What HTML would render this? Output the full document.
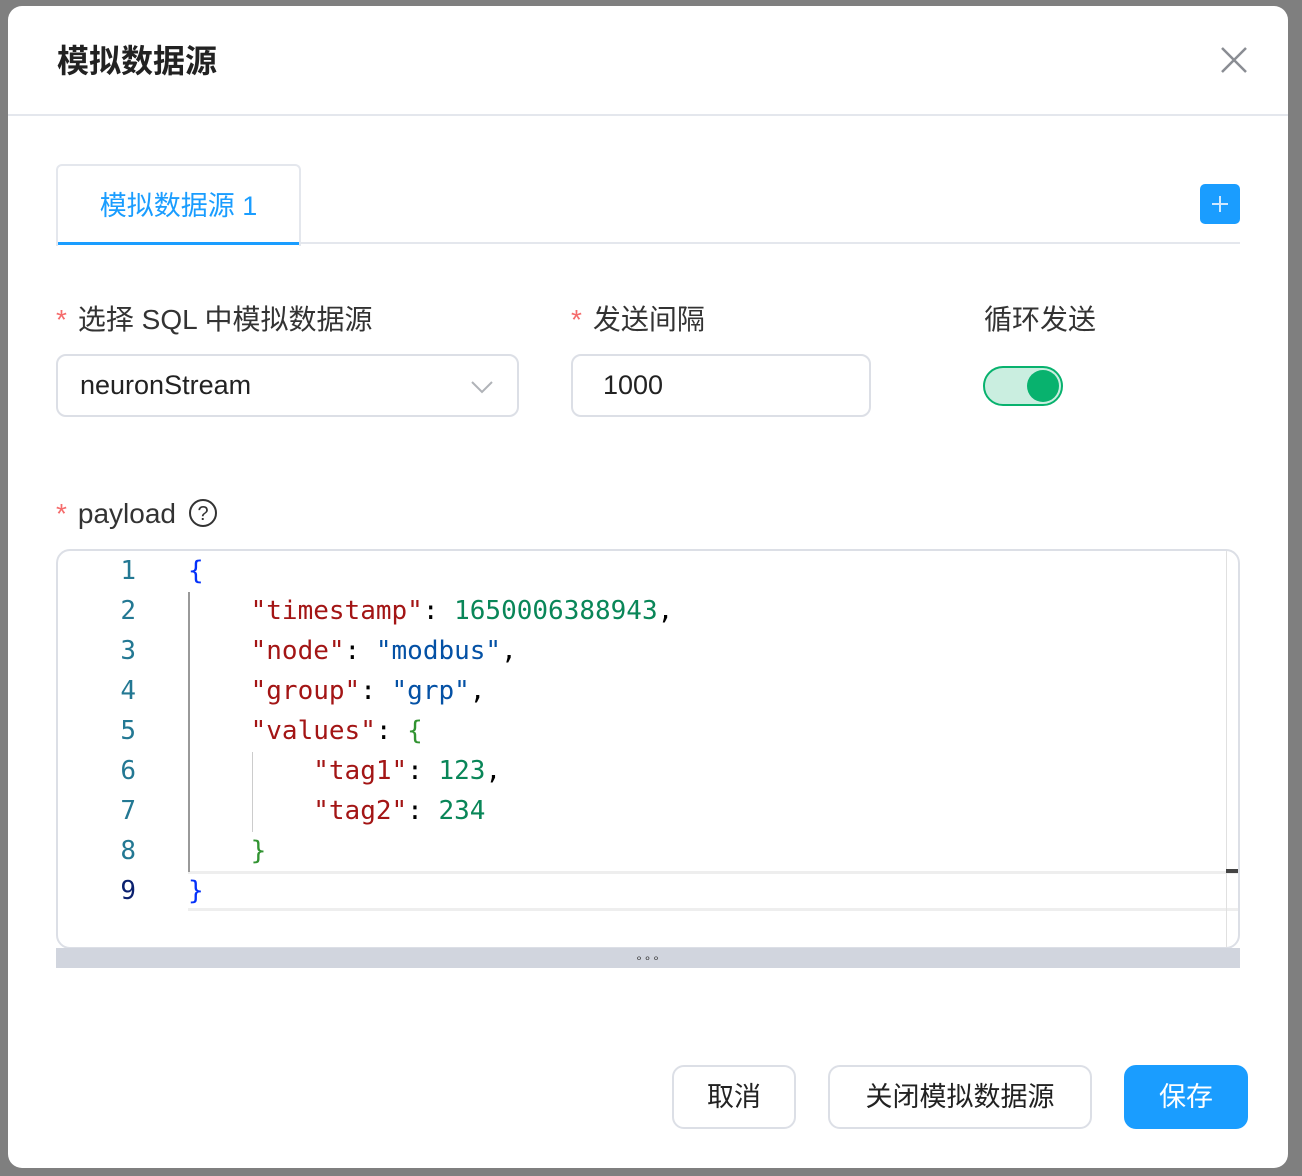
<!DOCTYPE html>
<html><head><meta charset="utf-8"><style>
*{box-sizing:border-box;margin:0;padding:0}
body{width:1302px;height:1176px;background:#7f7f7f;position:relative;overflow:hidden;font-family:"Liberation Sans","Noto Sans CJK SC",sans-serif;color:#333}
.dlg{position:absolute;left:8px;top:6px;width:1280px;height:1162px;background:#fff;border-radius:14px}
.abs{position:absolute}
.title{left:49px;top:30px;font-size:32px;font-weight:bold;color:#222}
.hdr{left:0;top:108px;width:1280px;height:2px;background:#e4e7ed}
.tab{left:48px;top:158px;width:245px;height:82px;border:2px solid #e4e7ed;border-bottom:none;border-radius:6px 6px 0 0;color:#1a9dff;font-size:27px;text-align:center;line-height:80px}
.tabline{left:48px;top:236px;width:1184px;height:2px;background:#e4e7ed}
.tabact{left:50px;top:236px;width:241px;height:3px;background:#1a9dff}
.plus{left:1192px;top:178px;width:40px;height:40px;background:#1a9dff;border-radius:5px}
.lbl{font-size:28px;color:#333;top:292px}
.req{color:#f56c6c;margin-right:11px}
.inp{border:2px solid #dcdfe6;border-radius:10px;height:63px;font-size:27px;line-height:59px;padding-left:22px;color:#222}
.sw{left:975px;top:360px;width:80px;height:40px;border-radius:20px;background:#caeee0;border:2px solid #08b26e}
.knob{position:absolute;right:2px;top:2px;width:32px;height:32px;border-radius:50%;background:#08b26e}
.ed{left:48px;top:543px;width:1184px;height:400px;border:2px solid #dcdfe6;border-radius:14px;overflow:hidden;font-family:"DejaVu Sans Mono",monospace;font-size:26px}
.ln{position:absolute;left:0;width:78px;text-align:right;color:#237893;height:40px;line-height:40px}
.cl{position:absolute;left:130px;height:40px;line-height:40px;white-space:pre;color:#000}
.k{color:#a31515}.n{color:#098658}.s{color:#0451a5}.b{color:#0431fa}.g{color:#319331}
.bar{left:48px;top:942px;width:1184px;height:20px;background:#d1d5de;text-align:center;font-size:12px;line-height:20px;color:#333;letter-spacing:1px}
.btn{top:1059px;height:64px;border:2px solid #dcdfe6;border-radius:12px;font-size:27px;text-align:center;line-height:60px;color:#222}
</style></head><body>
<div class="dlg">
<div class="abs title">模拟数据源</div>
<svg class="abs" style="left:1212px;top:40px" width="28" height="28"><path d="M2 2L26 26M26 2L2 26" stroke="#8a8d93" stroke-width="2.5"/></svg>
<div class="abs hdr"></div>
<div class="abs tabline"></div>
<div class="abs tab">模拟数据源 1</div>
<div class="abs tabact"></div>
<div class="abs plus"><svg width="40" height="40"><path d="M20 12V28M12 20H28" stroke="#cfe8ff" stroke-width="2"/></svg></div>
<div class="abs lbl" style="left:48px"><span class="req">*</span>选择 SQL 中模拟数据源</div>
<div class="abs lbl" style="left:563px"><span class="req">*</span>发送间隔</div>
<div class="abs lbl" style="left:976px">循环发送</div>
<div class="abs inp" style="left:48px;top:348px;width:463px">neuronStream
<svg class="abs" style="right:24px;top:24px" width="22" height="14"><path d="M1 2L11 12L21 2" fill="none" stroke="#b0b3b8" stroke-width="2"/></svg></div>
<div class="abs inp" style="left:563px;top:348px;width:300px;padding-left:30px">1000</div>
<div class="abs sw"><div class="knob"></div></div>
<div class="abs lbl" style="left:48px;top:492px"><span class="req">*</span>payload <svg style="vertical-align:-5px;margin-left:4px" width="30" height="30"><circle cx="15" cy="15" r="13" fill="none" stroke="#333" stroke-width="2"/><text x="15" y="22" text-anchor="middle" font-size="20" font-family="Liberation Sans" fill="#333">?</text></svg></div>
<div class="abs ed">
<div class="abs" style="left:130px;top:320px;width:1050px;height:40px;border-top:3px solid #eee;border-bottom:3px solid #eee"></div>
<div class="abs" style="left:130px;top:41px;width:2px;height:280px;background:#999"></div>
<div class="abs" style="left:194px;top:201px;width:1px;height:80px;background:#ccc"></div>
<div class="abs" style="left:1168px;top:0;width:1px;height:400px;background:#e0e0e0"></div>
<div class="abs" style="left:1168px;top:318px;width:12px;height:4px;background:#444"></div>
<div class="ln" style="top:0">1</div><div class="ln" style="top:40px">2</div><div class="ln" style="top:80px">3</div><div class="ln" style="top:120px">4</div><div class="ln" style="top:160px">5</div><div class="ln" style="top:200px">6</div><div class="ln" style="top:240px">7</div><div class="ln" style="top:280px">8</div><div class="ln" style="top:320px;color:#0b216f">9</div>
<div class="cl" style="top:0"><span class="b">{</span></div>
<div class="cl" style="top:40px">    <span class="k">"timestamp"</span>: <span class="n">1650006388943</span>,</div>
<div class="cl" style="top:80px">    <span class="k">"node"</span>: <span class="s">"modbus"</span>,</div>
<div class="cl" style="top:120px">    <span class="k">"group"</span>: <span class="s">"grp"</span>,</div>
<div class="cl" style="top:160px">    <span class="k">"values"</span>: <span class="g">{</span></div>
<div class="cl" style="top:200px">        <span class="k">"tag1"</span>: <span class="n">123</span>,</div>
<div class="cl" style="top:240px">        <span class="k">"tag2"</span>: <span class="n">234</span></div>
<div class="cl" style="top:280px">    <span class="g">}</span></div>
<div class="cl" style="top:320px"><span class="b">}</span></div>
</div>
<div class="abs bar">∘∘∘</div>
<div class="abs btn" style="left:664px;width:124px">取消</div>
<div class="abs btn" style="left:820px;width:264px">关闭模拟数据源</div>
<div class="abs btn" style="left:1116px;width:124px;background:#1a9dff;border-color:#1a9dff;color:#fff">保存</div>
</div>
</body></html>
